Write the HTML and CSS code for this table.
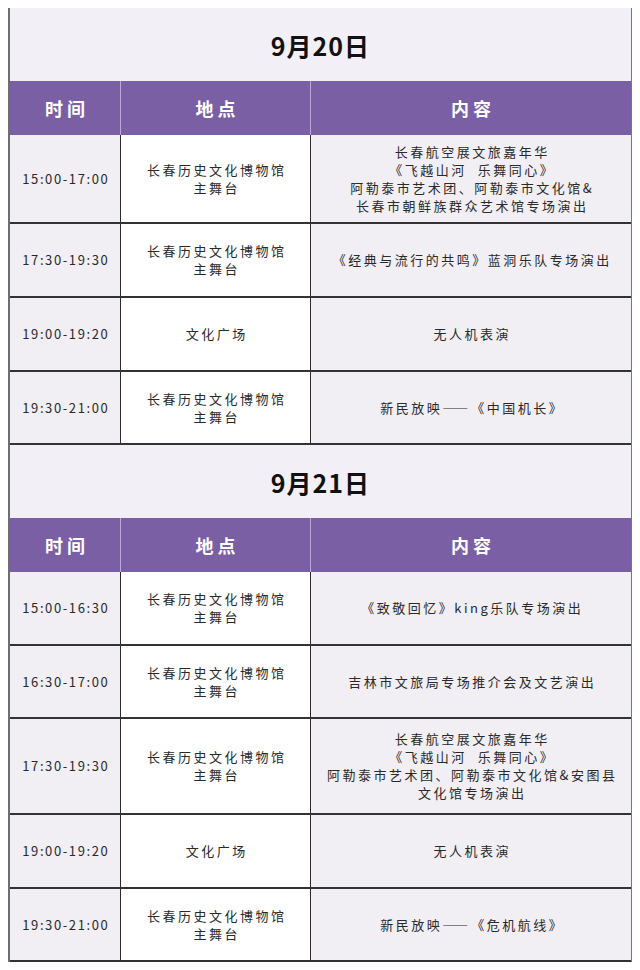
FILE: index.html
```html
<!DOCTYPE html>
<html lang="zh-CN">
<head>
<meta charset="utf-8">
<title>活动日程</title>
<link rel="stylesheet" href="styles.css">
</head>
<body>
<div class="sheet">
  <section class="day">
    <div class="day-title">9月20日</div>
    <div class="head">
      <div class="hcell">时间</div>
      <div class="hcell">地点</div>
      <div class="hcell">内容</div>
    </div>
    <div class="row h89">
      <div class="cell time">15:00-17:00</div>
      <div class="cell place">长春历史文化博物馆<br>主舞台</div>
      <div class="cell content">长春航空展文旅嘉年华<br>《飞越山河&nbsp;&nbsp;乐舞同心》<br>阿勒泰市艺术团、阿勒泰市文化馆&amp;<br>长春市朝鲜族群众艺术馆专场演出</div>
    </div>
    <div class="row h74">
      <div class="cell time">17:30-19:30</div>
      <div class="cell place">长春历史文化博物馆<br>主舞台</div>
      <div class="cell content">《经典与流行的共鸣》蓝洞乐队专场演出</div>
    </div>
    <div class="row h74">
      <div class="cell time">19:00-19:20</div>
      <div class="cell place">文化广场</div>
      <div class="cell content">无人机表演</div>
    </div>
    <div class="row h73">
      <div class="cell time">19:30-21:00</div>
      <div class="cell place">长春历史文化博物馆<br>主舞台</div>
      <div class="cell content"><span>新民放映<span class="dash">——</span>《中国机长》</span></div>
    </div>
  </section>
  <section class="day">
    <div class="day-title">9月21日</div>
    <div class="head">
      <div class="hcell">时间</div>
      <div class="hcell">地点</div>
      <div class="hcell">内容</div>
    </div>
    <div class="row h74">
      <div class="cell time">15:00-16:30</div>
      <div class="cell place">长春历史文化博物馆<br>主舞台</div>
      <div class="cell content">《致敬回忆》king乐队专场演出</div>
    </div>
    <div class="row h73">
      <div class="cell time">16:30-17:00</div>
      <div class="cell place">长春历史文化博物馆<br>主舞台</div>
      <div class="cell content">吉林市文旅局专场推介会及文艺演出</div>
    </div>
    <div class="row h96">
      <div class="cell time">17:30-19:30</div>
      <div class="cell place">长春历史文化博物馆<br>主舞台</div>
      <div class="cell content">长春航空展文旅嘉年华<br>《飞越山河&nbsp;&nbsp;乐舞同心》<br>阿勒泰市艺术团、阿勒泰市文化馆&amp;安图县<br>文化馆专场演出</div>
    </div>
    <div class="row h74">
      <div class="cell time">19:00-19:20</div>
      <div class="cell place">文化广场</div>
      <div class="cell content">无人机表演</div>
    </div>
    <div class="row h73">
      <div class="cell time">19:30-21:00</div>
      <div class="cell place">长春历史文化博物馆<br>主舞台</div>
      <div class="cell content"><span>新民放映<span class="dash">——</span>《危机航线》</span></div>
    </div>
  </section>
</div>
</body>
</html>
```
FILE: styles.css
```css
html, body {
  margin: 0;
  padding: 0;
  background: #ffffff;
}
body {
  padding: 8px;
  font-family: "Noto Sans CJK SC", "Noto Sans", sans-serif;
  color: #2a2a2a;
}
.sheet {
  width: 624px;
  box-sizing: border-box;
  border-left: 2px solid #6e6e6e;
  border-right: 1px solid #777777;
}
.day-title {
  height: 73px;
  background: #f2eff6;
  display: flex;
  align-items: center;
  justify-content: center;
  font-size: 25px;
  font-weight: 700;
  color: #111111;
  letter-spacing: 1px;
}
.head {
  display: grid;
  grid-template-columns: 110px 190px 1fr;
  height: 54px;
  background: #7b5fa5;
}
.hcell {
  display: flex;
  align-items: center;
  justify-content: center;
  color: #ffffff;
  font-size: 18px;
  font-weight: 700;
  letter-spacing: 4px;
  padding-left: 4px;
}
.hcell + .hcell {
  border-left: 1px solid #b9a8d8;
}
.row {
  display: grid;
  grid-template-columns: 110px 190px 1fr;
  box-sizing: border-box;
  border-bottom: 2px solid #333333;
}
.h73 { height: 73px; }
.h74 { height: 74px; }
.h89 { height: 89px; }
.h96 { height: 96px; }
.cell {
  display: flex;
  align-items: center;
  justify-content: center;
  text-align: center;
  box-sizing: border-box;
  font-size: 13px;
  line-height: 18px;
  letter-spacing: 2.5px;
  padding-left: 2.5px;
}
.cell + .cell {
  border-left: 1px solid #2b2b2b;
}
.dash {
  letter-spacing: 1px;
  margin-right: 2px;
}
.time {
  background: #f1eef4;
  letter-spacing: 1.6px;
  padding-left: 1.6px;
}
.place {
  background: #ffffff;
}
.content {
  background: #f1eef4;
}
```
